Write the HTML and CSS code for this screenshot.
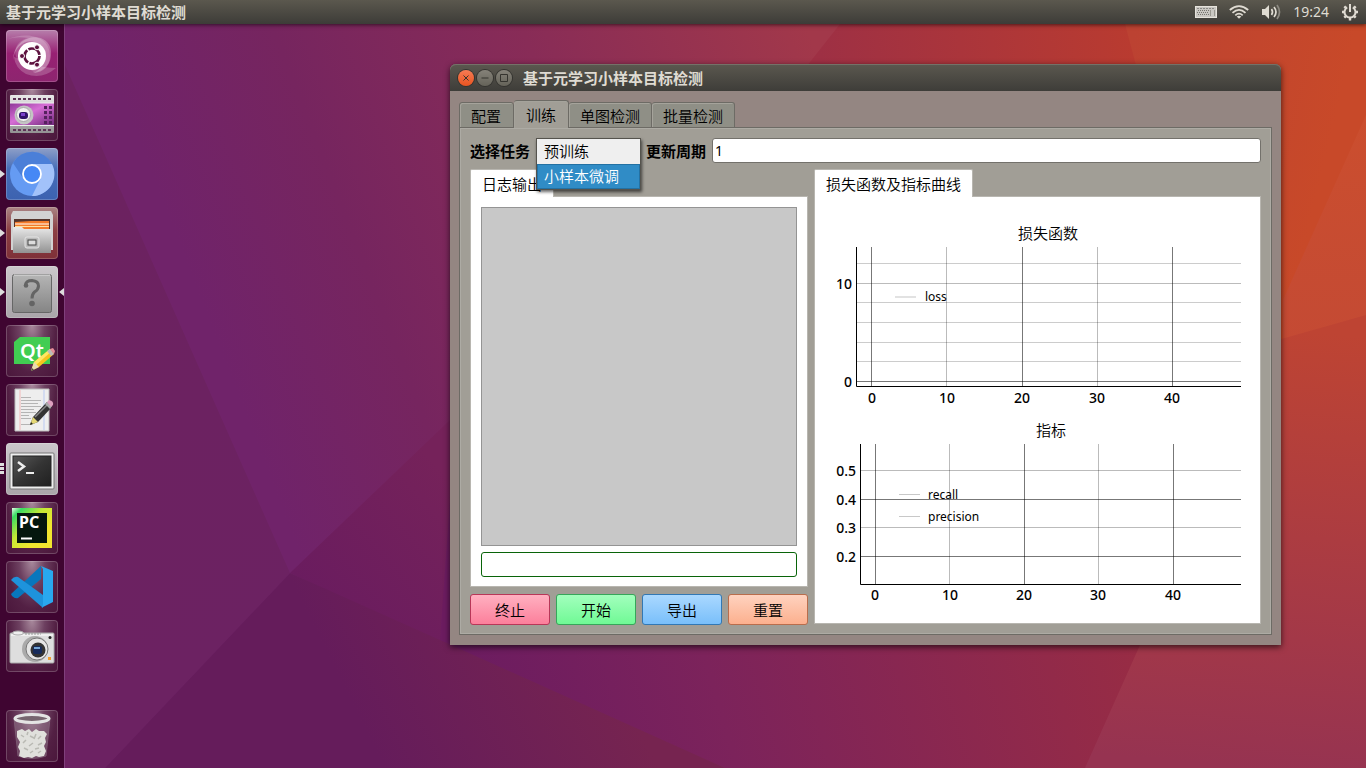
FILE: index.html
```html
<!DOCTYPE html>
<html lang="zh-CN">
<head>
<meta charset="utf-8">
<title>基于元学习小样本目标检测</title>
<link rel="stylesheet" href="styles.css">
</head>
<body>
<svg class="wallpaper" viewBox="0 0 1366 768" preserveAspectRatio="none" aria-hidden="true">
  <defs>
    <linearGradient id="wTop" gradientUnits="userSpaceOnUse" x1="200" y1="300" x2="820" y2="60"><stop stop-color="#70236a"/><stop offset=".25" stop-color="#76255f"/><stop offset=".6" stop-color="#882c57"/><stop offset="1" stop-color="#a2384a"/></linearGradient>
    <linearGradient id="wLeft" gradientUnits="userSpaceOnUse" x1="65" y1="200" x2="250" y2="640"><stop stop-color="#6c2260"/><stop offset="1" stop-color="#6c2262"/></linearGradient>
    <linearGradient id="wMid" gradientUnits="userSpaceOnUse" x1="290" y1="620" x2="450" y2="480"><stop stop-color="#681b60"/><stop offset="1" stop-color="#75225a"/></linearGradient>
    <linearGradient id="wDark" gradientUnits="userSpaceOnUse" x1="380" y1="760" x2="600" y2="650"><stop stop-color="#651c5b"/><stop offset="1" stop-color="#762450"/></linearGradient>
    <linearGradient id="wBottom" gradientUnits="userSpaceOnUse" x1="500" y1="760" x2="1120" y2="580"><stop stop-color="#6c1c60"/><stop offset=".35" stop-color="#7c235b"/><stop offset="1" stop-color="#982c44"/></linearGradient>
    <linearGradient id="wCorner" gradientUnits="userSpaceOnUse" x1="1290" y1="330" x2="1250" y2="768"><stop stop-color="#be4433"/><stop offset=".7" stop-color="#a33848"/><stop offset="1" stop-color="#963351"/></linearGradient>
    <linearGradient id="wRed" gradientUnits="userSpaceOnUse" x1="820" y1="50" x2="1130" y2="20"><stop stop-color="#9e3044"/><stop offset="1" stop-color="#b93b30"/></linearGradient>
    <linearGradient id="wOrange" gradientUnits="userSpaceOnUse" x1="1130" y1="50" x2="1340" y2="100"><stop stop-color="#bc4232"/><stop offset="1" stop-color="#c84929"/></linearGradient>
    <linearGradient id="wEdge" x2="0" y2="1"><stop stop-color="#cb4e2e"/><stop offset="1" stop-color="#c44a34"/></linearGradient>
  </defs>
  <rect width="1366" height="768" fill="url(#wTop)"/>
  <path d="M65 65L290 573L105 768H0V0H65Z" fill="url(#wLeft)"/>
  <path d="M290 573L450 420L700 420L560 700Z" fill="url(#wMid)"/>
  <path d="M450 500H1180V768H725L450 652L440 640Z" fill="url(#wBottom)"/>
  <path d="M290 573L105 768H725L440 640Z" fill="url(#wDark)"/>
  <path d="M840 24L780 100H1150L1125 24Z" fill="url(#wRed)"/>
  <path d="M1125 24L1140 80L1240 340H1366V24Z" fill="url(#wOrange)"/>
  <path d="M1366 115L1283 300V345L1366 325Z" fill="url(#wEdge)"/>
  <path d="M1260 345L1366 315V768H1085L1140 645Z" fill="url(#wCorner)"/>
</svg>

<header class="panel">
  <span class="panel-title">基于元学习小样本目标检测</span>
  <div class="indicators">
    <svg width="22" height="14" viewBox="0 0 22 14"><rect x=".5" y="1.500" width="21" height="11" fill="#c9c7c2" stroke="#e6e3dc"/><path d="M2 3.500h18" stroke="#8b8a86" stroke-dasharray="2 1"/><path d="M3 5.500h11M2 7.500h12M3 9.500h11" stroke="#77756f" stroke-dasharray="1 1"/><path d="M15.500 5v6M19.500 5v6" stroke="#99978f"/></svg>
    <svg width="20" height="14" viewBox="0 0 20 14" fill="none" stroke="#dfdbd2" stroke-width="1.800"><path d="M.8 5Q10-2.800 19.200 5M3.500 7.800Q10 2 16.500 7.800M6.300 10.300Q10 7 13.700 10.300"/><path d="M10 13.800L7.700 11.600Q10 10 12.300 11.600Z" fill="#dfdbd2" stroke="none"/></svg>
    <svg width="20" height="16" viewBox="0 0 20 16" fill="none" stroke="#dfdbd2" stroke-width="1.700"><path d="M1 5h3l4-4v14L4 11H1Z" fill="#dfdbd2" stroke="none"/><path d="M10.500 5q2 3 0 6M13 3q4 5 0 10"/><path d="M16 1q5 7 0 14" stroke="#8d8a82"/></svg>
    <time>19:24</time>
    <svg width="18" height="18" viewBox="0 0 18 18" fill="none" stroke="#dfdbd2"><path d="M6.200 4.300A5.500 5.500 0 1 0 11.800 4.300" stroke-width="2"/><path d="M9 1v8" stroke-width="2"/><path d="M9 15v2.500M1 9h2M15 9h2M3.300 3.300l1.600 1.600M14.700 3.300l-1.600 1.600M3.300 14.700l1.600-1.600M14.700 14.700l-1.600-1.600" stroke-width="2.400"/></svg>
  </div>
</header>

<nav class="launcher" aria-label="启动器">
  <svg class="defs" aria-hidden="true"><defs>
    <linearGradient id="silver" x2="0" y2="1"><stop stop-color="#e9e9e9"/><stop offset="1" stop-color="#929292"/></linearGradient>
    <linearGradient id="plate" x2="0" y2="1"><stop stop-color="#b5b5b5"/><stop offset="1" stop-color="#858585"/></linearGradient>
    <linearGradient id="dark" x2="1" y2="1"><stop stop-color="#585858"/><stop offset=".5" stop-color="#343434"/><stop offset="1" stop-color="#202020"/></linearGradient>
    <linearGradient id="film" x2="1" y2="1"><stop stop-color="#8d3697"/><stop offset=".45" stop-color="#d66ed5"/><stop offset="1" stop-color="#72297d"/></linearGradient>
    <linearGradient id="pc" x2="1" y2="1"><stop stop-color="#eaffea"/><stop offset=".13" stop-color="#38dc62"/><stop offset=".4" stop-color="#c4e935"/><stop offset=".7" stop-color="#f2e62f"/></linearGradient>
  </defs></svg>
  <button class="tile dash" aria-label="Dash"><svg viewBox="0 0 52 52"><g fill="#fff"><path opacity=".28" d="M7 30C8 3 43 0 45 21C46 34 38 43 27 43C39 39 42 24 33 15C24 6 9 14 7 30Z"/><path opacity=".18" d="M2 9C20 2 44 5 44 26C44 36 36 42 28 42L14 33C6 24 8 12 22 8Q11 6 2 9Z"/><path opacity=".2" d="M50 38Q36 50 20 44Q9 38 8 27L26 34Q38 38 50 38Z"/><circle cx="26" cy="26" r="14"/></g><circle cx="26" cy="26" r="7.500" fill="none" stroke="#5d123f" stroke-width="2.700" stroke-dasharray="14.300 1.400"/><g fill="#5d123f" stroke="#fff"><circle cx="16" cy="26" r="2.500"/><circle cx="31" cy="17.300" r="2.500"/><circle cx="31" cy="34.700" r="2.500"/></g></svg></button>
  <button class="tile" aria-label="录屏"><svg viewBox="0 0 52 52"><rect x="4" y="6" width="44" height="38" rx="1" fill="url(#silver)"/><rect x="4" y="14" width="44" height="22" fill="url(#film)"/><path d="M4 14h44M4 36.500h44" stroke="#eee"/><path d="M7 10h39M7 41h39" stroke="#5e3357" stroke-width="2" stroke-dasharray="3 2"/><path d="M39.500 17v18M44.500 17v18" stroke="#54215d" stroke-width="3" stroke-dasharray="3 2"/><circle cx="18" cy="26" r="9.500" fill="#c4c4c4"/><circle cx="17.500" cy="25.500" r="7" fill="#f2f2f2" stroke="#aaa"/><rect x="13" y="23" width="9" height="7" rx="3" fill="#30136a"/><rect x="15" y="24" width="4" height="3" fill="#7941ca"/></svg></button>
  <button class="tile blue running" aria-label="Chromium"><svg viewBox="0 0 52 52"><circle cx="26" cy="26" r="22" fill="#659bf3"/><path d="M7 15A22 22 0 0 1 46 16H26L17 30Z" fill="#4b7fd8"/><path d="M46 16A22 22 0 0 1 26 48L35 30Q34 20 27 16Z" fill="#a2c2fa"/><circle cx="26" cy="26" r="9" fill="#4688f5" stroke="#fff" stroke-width="1.800"/></svg></button>
  <button class="tile red running" aria-label="文件"><svg viewBox="0 0 52 52"><path d="M7 4h38l2 4v35H5V8Z" fill="#d2d2d2"/><path d="M8 12h36v10H8Z" fill="#55352c"/><path d="M9 15l16-1h18v8H9Z" fill="#f47c2b"/><path d="M9 17h34" stroke="#fff"/><path d="M9 19.500h34" stroke="#ffe1a0"/><path d="M7 20h9l2 2h27v24H7Z" fill="url(#silver)"/><rect x="19" y="30" width="14" height="11" rx="2" fill="#bbb" stroke="#e5e5e5"/><rect x="22" y="33" width="8" height="5" fill="#ddd" stroke="#444"/></svg></button>
  <button class="tile grey running focused" aria-label="未知应用"><svg viewBox="0 0 52 52"><rect x="6.500" y="8.500" width="39" height="38" rx="2" fill="url(#plate)" stroke="#666"/><path d="M8 9h36" stroke="#ddd"/><path d="M19.500 19Q20 14.500 26 14.500Q32.500 15 32.500 20Q32.500 23.500 28.500 26Q26 28 26 32.500" fill="none" stroke="#646464" stroke-width="3"/><circle cx="20" cy="19.500" r="2.300" fill="#646464"/><circle cx="26" cy="37.500" r="2.800" fill="#646464"/></svg></button>
  <button class="tile" aria-label="Qt Creator"><svg viewBox="0 0 52 52"><path d="M14 12H44V39H8V17Z" fill="#41cd52"/><text x="14" y="33" font-size="20" font-weight="600" fill="#fff">Qt</text><path d="M25 46l3-9L44 24l4 5-15 13Z" fill="#f6c31f"/><path d="M28 37L44 24l2 2L30 40Z" fill="#ffe765"/><path d="M25 46l3-9 5 5Z" fill="#eadbb0"/><path d="M25 46l1-3 2 2Z" fill="#444"/><path d="M41 26l3-2 4 5-3 2Z" fill="#bbb"/><path d="M44 24l3-1 2 3-1 3Z" fill="#e88e9c"/></svg></button>
  <button class="tile" aria-label="文本编辑器"><svg viewBox="0 0 52 52"><path d="M9 5h34v42H9Z" fill="#eee" stroke="#bbb"/><path d="M14 6v40" stroke="#f2b9b9"/><path d="M38 6v40" stroke="#b9c9f2"/><path d="M15 13.500h10M15 16.500h20M15 19.500h17M15 22.500h20M15 25.500h13M15 28.500h15M15 31.500h8M15 34.500h10M15 40.500h9" stroke="#b4b4b4"/><path d="M24 41l3-8L41 18l5 5-14 15Z" fill="#333"/><path d="M29 33L42 20" stroke="#888" stroke-width="1.500"/><path d="M24 41l3-8 5 5Z" fill="#e4d875"/><path d="M24 41l1-3 2 2Z" fill="#222"/><path d="M39 20l2-2 5 4-2 3Z" fill="#aaa"/><path d="M41 18l2-2q5 1 4 5l-2 2Z" fill="#dda0c0"/></svg></button>
  <button class="tile grey multi" aria-label="终端"><svg viewBox="0 0 52 52"><rect x="4" y="10" width="44" height="36" rx="1" fill="#eee" stroke="#777"/><rect x="7" y="13" width="38" height="30" fill="url(#dark)" stroke="#222"/><path d="M12 19l6 4.500-6 4.500" fill="none" stroke="#eee" stroke-width="2.500"/><path d="M20 30h8" stroke="#eee" stroke-width="2"/></svg></button>
  <button class="tile" aria-label="PyCharm"><svg viewBox="0 0 52 52"><path d="M6 6h40v40H6Z" fill="url(#pc)"/><path d="M11 11h30v30H11Z" fill="#05170e"/><text x="13" y="26" font-size="16" font-weight="700" fill="#fff">PC</text><path d="M15 36.500h11" stroke="#fff" stroke-width="2"/></svg></button>
  <button class="tile" aria-label="Visual Studio Code"><svg viewBox="0 0 52 52"><path d="M5 33L35 5v13L12 37q-3 1-6-2Z" fill="#0877bd"/><path d="M5 19q3-4 7-3L37 34v13Z" fill="#1e93dc"/><path d="M35 5l12 5v31l-12 6q2-1 2-4V8Z" fill="#29a8ef"/></svg></button>
  <button class="tile" aria-label="相机"><svg viewBox="0 0 52 52"><rect x="4" y="13" width="44" height="30" rx="1" fill="#dedede" stroke="#aaa"/><path d="M5 15h42" stroke="#fff"/><ellipse cx="12" cy="13" rx="5.500" ry="2" fill="#eee" stroke="#aaa"/><path d="M19 14h16" stroke="#999" stroke-dasharray="2 1"/><circle cx="29" cy="29" r="13" fill="#aaa"/><circle cx="31" cy="29" r="11" fill="#e5e5e5" stroke="#777"/><circle cx="32" cy="30" r="7.500" fill="#333"/><rect x="27" y="26" width="9" height="8" rx="2" fill="#172b5b"/><path d="M28 28h6" stroke="#75a5d4" stroke-width="2"/><rect x="42" y="37" width="3" height="3" fill="#f39f30"/><circle cx="44" cy="17.500" r="1.500" fill="#222"/></svg></button>
  <button class="tile trash" aria-label="回收站"><svg viewBox="0 0 52 52"><path d="M8 8l4 38q14 5 28 0l4-38Z" fill="#b9aab4" opacity=".3" stroke="#ccc"/><path d="M11 21l5-2 3 2 4-2 3 3 4-3 3 2 5 0 3 3-2 4 1 4-2 4 2 5-2 5-5 1-3-1-4 2-4-1-4 1-5-2 1-5-2-4 2-5-3-5Z" fill="#e0e0dc"/><path d="M15 25l3 2M20 30l-3 3M24 26l4 2M30 24l-2 5M35 26l-3 3M36 33l-4 2M27 33l-4 3M18 38l4 2M29 39l4-1M24 43l3-2M35 41l-3 2M22 22l-1 3" fill="none" stroke="#b9b9b3" stroke-width="1.500"/><ellipse cx="26" cy="8.500" rx="17" ry="4" fill="#77656f" stroke="#e4e4e4" stroke-width="3"/></svg></button>
</nav>

<main class="window">
  <div class="titlebar">
    <button class="ctl close" aria-label="关闭"><svg viewBox="0 0 16 16"><path d="M5.500 5.500l5 5M10.500 5.500l-5 5"/></svg></button>
    <button class="ctl" aria-label="最小化"><svg viewBox="0 0 16 16"><path d="M4.500 8h7"/></svg></button>
    <button class="ctl" aria-label="最大化"><svg viewBox="0 0 16 16"><path d="M4.500 4.500h7v7h-7Z"/></svg></button>
    <h1>基于元学习小样本目标检测</h1>
  </div>
  <div class="content">
    <div class="tabs" role="tablist">
      <button class="tab" role="tab">配置</button>
      <button class="tab active" role="tab" aria-selected="true">训练</button>
      <button class="tab" role="tab">单图检测</button>
      <button class="tab" role="tab">批量检测</button>
    </div>
    <section class="pane">
      <div class="options">
        <label for="task">选择任务</label>
        <div class="combo">
          <select id="task" size="2"><option>预训练</option><option selected>小样本微调</option></select>
        </div>
        <label for="period">更新周期</label>
        <input id="period" type="text" value="1">
      </div>
      <div class="columns">
        <div class="left">
          <section class="sheet">
            <h2>日志输出</h2>
            <div class="sheet-body log">
              <textarea aria-label="日志输出" readonly></textarea>
              <input type="text" aria-label="进度">
            </div>
          </section>
          <div class="actions">
            <button class="stop">终止</button>
            <button class="start">开始</button>
            <button class="export">导出</button>
            <button class="reset">重置</button>
          </div>
        </div>
        <section class="sheet">
          <h2>损失函数及指标曲线</h2>
          <div class="sheet-body">
            <svg class="chart" viewBox="0 0 445 213">
              <text class="title" x="233" y="42">损失函数</text>
              <path class="minor" d="M42 66.500H426M42 105.500H426M42 125.500H426M42 145.500H426M42 164.500H426"/>
              <path class="middle" d="M42 86.500H426M131.500 50V189M282.500 50V189"/>
              <path class="major" d="M42 184.500H426M56.500 50V189M207.500 50V189M357.500 50V189"/>
              <path class="axis" d="M41.500 50V189.500H426"/>
              <g class="y"><text x="37" y="92">10</text><text x="37" y="190">0</text></g>
              <g class="x"><text x="57" y="206">0</text><text x="132" y="206">10</text><text x="207" y="206">20</text><text x="282" y="206">30</text><text x="357" y="206">40</text></g>
              <path class="key soft" d="M80 100H101"/><text class="legend" x="110" y="104">loss</text>
            </svg>
            <svg class="chart" viewBox="0 0 445 213">
              <text class="title" x="236" y="26">指标</text>
              <path class="middle" d="M46 60.500H426M46 117.500H426M134.500 34V174M283.500 34V174"/>
              <path class="major" d="M46 89.500H426M46 146.500H426M60.500 34V174M209.500 34V174M358.500 34V174"/>
              <path class="axis" d="M45.500 34V174.500H426"/>
              <g class="y"><text x="41" y="66">0.5</text><text x="41" y="95">0.4</text><text x="41" y="123">0.3</text><text x="41" y="152">0.2</text></g>
              <g class="x"><text x="60" y="190">0</text><text x="135" y="190">10</text><text x="209" y="190">20</text><text x="283" y="190">30</text><text x="358" y="190">40</text></g>
              <path class="key" d="M84 84.500H105M84 106.500H105"/><text class="legend" x="113" y="89">recall</text><text class="legend" x="113" y="111">precision</text>
            </svg>
          </div>
        </section>
      </div>
    </section>
  </div>
</main>
</body>
</html>
```
FILE: styles.css
```css
* { box-sizing: border-box; }
body {
  margin: 0;
  height: 100vh;
  overflow: hidden;
  display: flex;
  flex-direction: column;
  background: #6f2369;
  color: #000;
  font: 350 15px/22px "Noto Sans CJK SC", "Noto Sans", sans-serif;
}
button, input, select, textarea { font: inherit; color: inherit; margin: 0; }
h1, h2 { margin: 0; font-size: 15px; }

.wallpaper { position: absolute; inset: 0; width: 100%; height: 100%; }

.panel {
  position: relative;
  z-index: 2;
  height: 24px;
  flex: none;
  display: flex;
  align-items: center;
  justify-content: space-between;
  padding: 0 7px 0 6px;
  background: linear-gradient(#5b584e, #3d3c38);
  box-shadow: 0 1px 4px #0009;
  color: #dfdbd2;
}
.panel-title { font-weight: 600; }
.indicators { display: flex; align-items: center; gap: 12px; font: 400 14px/22px "Noto Sans", sans-serif; }

.launcher {
  position: relative;
  width: 65px;
  flex: 1;
  min-height: 0;
  display: flex;
  flex-direction: column;
  align-items: center;
  gap: 7px;
  padding: 6px 0;
  background: #3f0531;
  border-right: 1px solid #80407c;
}
.defs { position: absolute; width: 0; height: 0; }
.tile {
  position: relative;
  width: 52px;
  height: 52px;
  flex: none;
  padding: 0;
  border: 0;
  border-radius: 4px;
  background: radial-gradient(ellipse at 50% 0, #a98a9d 0, #6d4060 35%, #532044 65%, #4a163b 100%);
  box-shadow: inset 0 0 0 1px #ffffff33;
  font-family: "Noto Sans", sans-serif;
}
.tile svg { display: block; width: 52px; height: 52px; }
.dash { background: linear-gradient(#b77fac, #982073 45%, #8d256f); }
.blue { background: linear-gradient(#8e9fc8, #476eb8 40%, #3c62b0); }
.red { background: linear-gradient(#aa8585, #8c3f43 45%, #7e3038); }
.grey { background: linear-gradient(#cbc8cb, #aaa5aa); }
.trash { margin-top: auto; }
.running::before, .focused::after, .multi::before {
  content: "";
  position: absolute;
  top: 22px;
  left: -6px;
  border: 4px solid transparent;
  border-left: 5px solid #ddd;
  border-right: 0;
}
.focused::after { left: auto; right: -6px; border-left: 0; border-right: 5px solid #ddd; }
.multi::before {
  top: 20px;
  width: 4px;
  height: 12px;
  border: 0;
  background: repeating-linear-gradient(#ddd 0 3px, transparent 3px 4px);
}

.window {
  position: absolute;
  inset: 64px 85px 123px 450px;
  display: flex;
  flex-direction: column;
  border-radius: 6px 6px 0 0;
  background: #948682;
  box-shadow: 0 2px 6px #000a;
}
.titlebar {
  height: 27px;
  flex: none;
  display: flex;
  align-items: center;
  gap: 3px;
  padding: 0 8px;
  border-radius: 6px 6px 0 0;
  background: linear-gradient(#5b584f, #3e3d39);
  box-shadow: inset 0 1px #747168;
  color: #dfdbd2;
}
.titlebar h1 { margin-left: 8px; font-weight: 600; }
.ctl {
  width: 16px;
  height: 16px;
  padding: 0;
  border: 0;
  border-radius: 50%;
  background: linear-gradient(#858279, #656359);
  box-shadow: 0 0 0 1px #34332f;
}
.ctl svg { display: block; fill: none; stroke: #35342f; }
.close { background: linear-gradient(#f57b54, #e95420); }

.content { flex: 1; min-height: 0; display: flex; flex-direction: column; padding: 9px 9px 10px; }
.tabs { position: relative; z-index: 1; display: flex; align-items: flex-end; margin-bottom: -1px; }
.tab {
  height: 26px;
  padding: 2px 11px 0;
  border: 1px solid #6d6b65;
  border-left-width: 0;
  border-radius: 3px 3px 0 0;
  background: #8f8f86;
  box-shadow: inset 1px 1px #a5a39b;
}
.tab:first-child { border-left-width: 1px; padding-right: 12px; }
.tab.active { height: 28px; padding: 0 12px; border-bottom: 0; background: #a19e96; }

.pane {
  flex: 1;
  min-height: 0;
  display: flex;
  flex-direction: column;
  gap: 6px;
  padding: 10px;
  border: 1px solid #6d6b65;
  background: #a19e96;
  box-shadow: inset 0 0 0 1px #adaba4;
}
.options { display: flex; align-items: center; gap: 6px; }
.options label { font-weight: 700; }
.options input {
  flex: 1;
  min-width: 0;
  height: 25px;
  padding: 0 2px;
  border: 1px solid #73716b;
  border-radius: 3px;
  background: #fff;
  font: 400 14px/22px "Noto Sans", sans-serif;
}
.combo { position: relative; z-index: 3; width: 104px; height: 25px; }
.combo select {
  position: absolute;
  top: 0;
  left: 0;
  width: 105px;
  height: 52px;
  padding: 0;
  border: 1px solid #55534d;
  border-radius: 0;
  background: #efefef;
  box-shadow: 1px 2px 3px #0009;
  overflow: hidden;
  outline: 0;
}
.combo option { height: 25px; padding: 1px 7px 2px; color: #000; font-weight: 350; }
.combo option:checked { background: linear-gradient(#308cc6, #308cc6); color: #fff; box-shadow: inset 0 0 0 1px #2371a3; }

.columns { flex: 1; min-height: 0; display: grid; grid-template-columns: 338fr 447fr; gap: 6px; }
.left { display: flex; flex-direction: column; gap: 7px; min-width: 0; margin-bottom: -1px; }
.sheet { flex: 1; min-width: 0; min-height: 0; display: flex; flex-direction: column; }
.sheet h2 {
  position: relative;
  align-self: flex-start;
  height: 28px;
  margin-bottom: -1px;
  padding: 3px 11px 0;
  border: 1px solid #b8b6b0;
  border-bottom: 0;
  border-radius: 2px 2px 0 0;
  background: #fff;
  font-weight: 350;
}
.sheet-body { flex: 1; min-height: 0; border: 1px solid #b8b6b0; background: #fff; }
.log { display: flex; flex-direction: column; gap: 6px; padding: 10px 10px 9px; }
.log textarea { flex: 1; border: 1px solid #949494; background: #c8c8c8; resize: none; }
.log input { width: 100%; height: 25px; border: 1px solid #096409; border-radius: 3px; background: #fff; }

.actions { display: grid; grid-template-columns: repeat(4, 1fr); gap: 6px; }
.actions button { height: 31px; padding: 0; border: 1px solid; border-radius: 3px; }
.actions .stop { background: linear-gradient(#ffb0c0, #fc7f9b); border-color: #b83758; }
.actions .start { background: linear-gradient(#a2ffbd, #70f995); border-color: #36a65a; }
.actions .export { background: linear-gradient(#aad8ff, #79bffa); border-color: #3278b4; }
.actions .reset { background: linear-gradient(#ffd2bf, #fcb08e); border-color: #b96d4c; }
.actions button, .tab { color: #000; }

.chart { display: block; width: 100%; fill: none; }
.chart text { fill: #000; font: 500 14px "Noto Sans", sans-serif; }
.chart .title { font: 350 15px "Noto Sans CJK SC", sans-serif; text-anchor: middle; }
.x { text-anchor: middle; }
.y { text-anchor: end; }
.chart .legend { font-size: 12px; font-weight: 400; }
.minor { stroke: #0003; }
.middle { stroke: #0004; }
.major { stroke: #0008; }
.axis { stroke: #000; }
.key { stroke: #c8c8c8; }
.soft { stroke: #e2e2e2; stroke-width: 2px; }
```
